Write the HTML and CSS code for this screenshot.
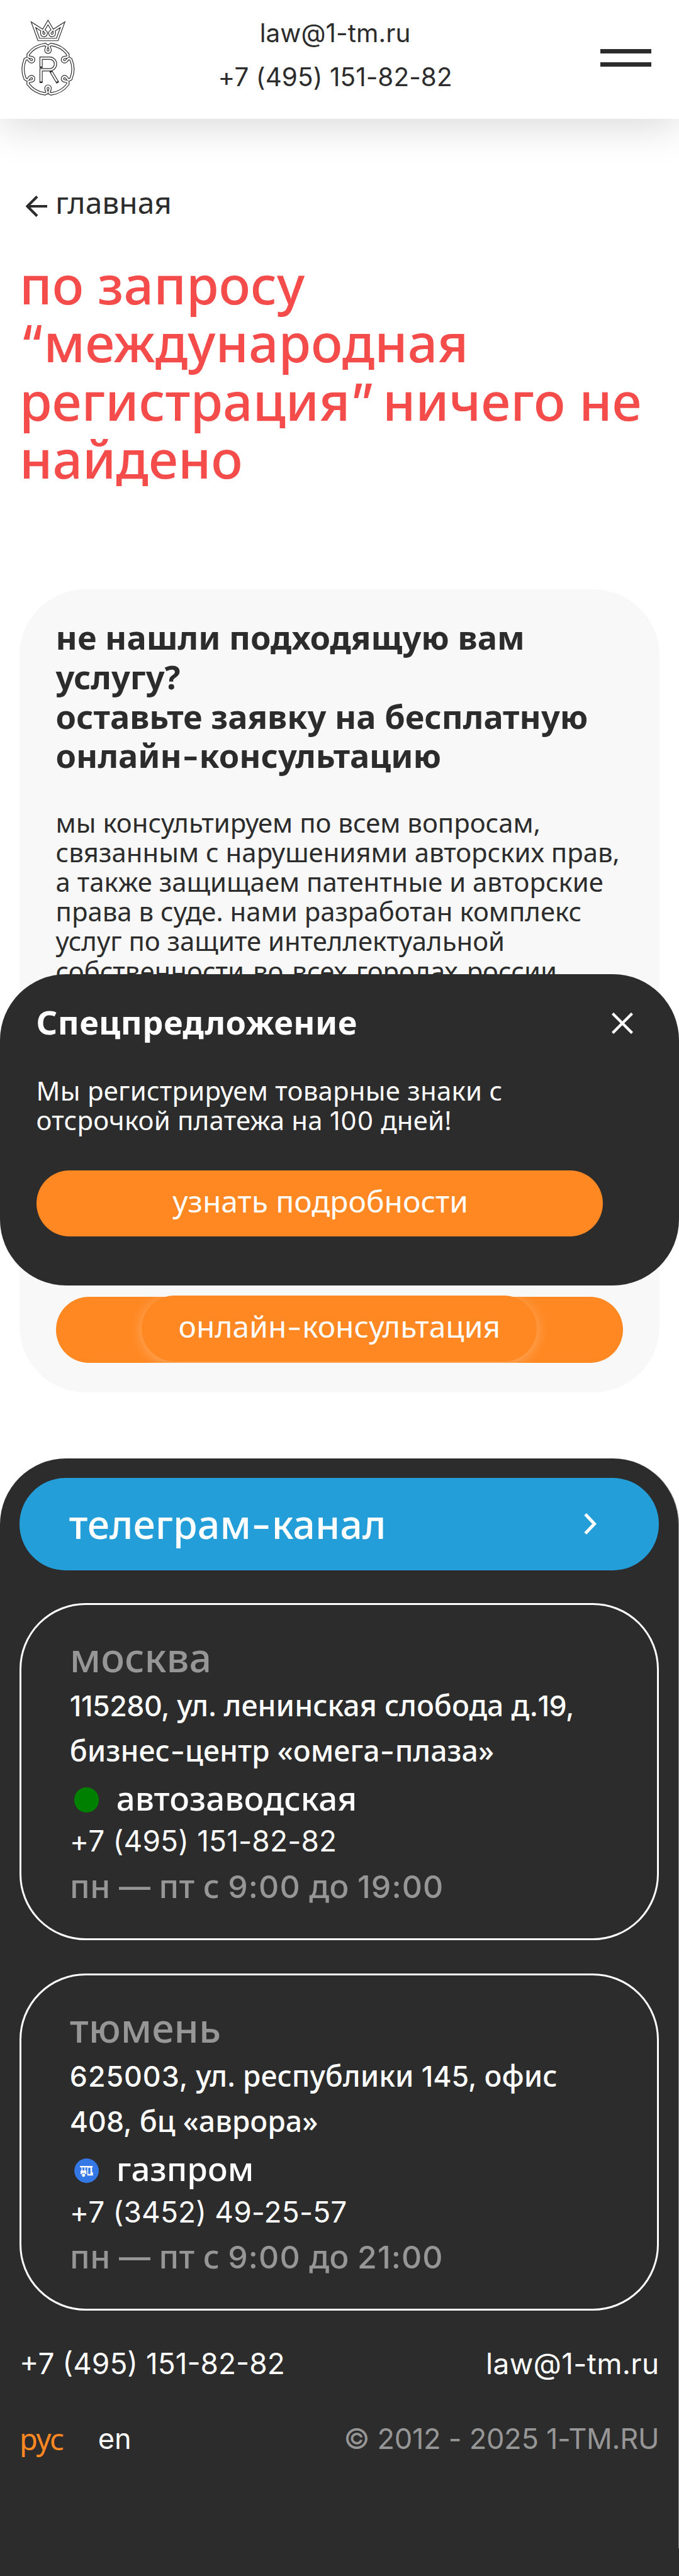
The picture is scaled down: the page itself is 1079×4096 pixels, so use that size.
FILE: index.html
```html
<!DOCTYPE html>
<html lang="ru">
<head>
<meta charset="utf-8">
<title>1-TM.RU</title>
<link rel="stylesheet" href="styles.css">
</head>
<body>
<div class="page">
  <header class="header">
    <svg class="logo" viewBox="12 8 89 126">
      <defs>
        <path id="link" d="M-5-40.2L-1.6-38.4C-1-36-3.5-34.5-3.5-31A3.5 3.5 0 0 0 3.5-31C3.5-34.5 1-36 1.6-38.4L5-40.2A40.5 40.5 0 0 1 32.3-24.4"/>
        <g id="mark" fill="none">
          <path d="M41.3 42.7L32.5 18.5L46.6 27.6C45.8 30 46.1 31 46.1 32.5A3.6 3.6 0 1 0 51.5 29.4C50 28.5 49 27.5 49.4 26.5L56.3 15L63.2 26.5C63.6 27.5 62.6 28.5 61.1 29.4A3.6 3.6 0 1 0 66.5 32.5C66.5 31 66.8 30 66 27.6L80.1 18.5L71.3 42.7Z"/>
          <g transform="translate(56.3 91)" stroke-linecap="round">
            <use href="#link"/><use href="#link" transform="rotate(60)"/><use href="#link" transform="rotate(120)"/>
            <use href="#link" transform="rotate(180)"/><use href="#link" transform="rotate(240)"/><use href="#link" transform="rotate(300)"/>
          </g>
          <path d="M45 86.5V73H59A9.5 9.5 0 0 1 59 92H45V111M62 96L71 111"/>
        </g>
      </defs>
      <use href="#mark" class="logo-line"/>
      <use href="#mark" class="logo-core"/>
    </svg>
    <div class="header-contacts">
      <a>law@1-tm.ru</a>
      <a>+7 (495) 151-82-82</a>
    </div>
    <div class="burger"><i></i><i></i></div>
  </header>

  <main class="main">
    <a class="back"><svg viewBox="0 0 34 34"><path d="M34 17H3M18 1.5L2.5 17L18 32.5"/></svg>главная</a>
    <h1 class="title">по запросу<br><span class="lat">“</span>международная<br>регистрация<span class="lat quote-end">”</span> ничего не<br>найдено</h1>

    <section class="card">
      <h2 class="card-title">не нашли подходящую вам<br>услугу?<br>оставьте заявку на бесплатную<br>онлайн<span class="dash">-</span>консультацию</h2>
      <p class="card-text">мы консультируем по всем вопросам,<br>связанным с нарушениями авторских прав,<br>а также защищаем патентные и авторские<br>права в суде. нами разработан комплекс<br>услуг по защите интеллектуальной<br><span class="loose">собственности во всех городах россии</span></p>
      <a class="button card-button"><span class="button-pulse">онлайн<span class="dash">-</span>консультация</span></a>
    </section>
  </main>

  <footer class="footer">
    <a class="telegram"><span>телеграм<span class="dash">-</span>канал</span><svg viewBox="0 0 20 34"><path d="M2.2 1.8L16.6 17L2.2 32.2"/></svg></a>

    <div class="office">
      <div class="city">москва</div>
      <div class="address"><span class="lat tight">115280,</span> ул. ленинская слобода д.<span class="lat tight">19,</span><br>бизнес<span class="dash">-</span>центр «омега<span class="dash">-</span>плаза»</div>
      <div class="metro"><i class="dot"></i>автозаводская</div>
      <div class="phone">+7 (495) 151-82-82</div>
      <div class="hours">пн <span class="lat">—</span> пт с <span class="lat wide">9:00</span> до <span class="lat wide">19:00</span></div>
    </div>

    <div class="office">
      <div class="city">тюмень</div>
      <div class="address"><span class="lat wide">625003,</span> ул. республики <span class="lat">145,</span> офис<br><span class="lat">408,</span> бц «аврора»</div>
      <div class="metro"><svg class="dot" viewBox="0 0 39 39"><circle cx="19.5" cy="19.5" r="19.5" fill="#3378e4"/><path d="M9 12H29V14H28V22H29.5V27H20.5V14H17.5V19H19V25H10V19H11.5V14H9ZM13 14V19H16V14ZM22 14.5V24.5H25.5V14.5Z" fill="#fff" fill-rule="evenodd"/><circle cx="14.6" cy="26.6" r="3" fill="#fff" stroke="#3378e4"/></svg>газпром</div>
      <div class="phone">+7 (3452) 49-25-57</div>
      <div class="hours">пн <span class="lat">—</span> пт с <span class="lat wide">9:00</span> до <span class="lat wide">21:00</span></div>
    </div>

    <div class="footer-row">
      <a>+7 (495) 151-82-82</a>
      <a class="mail">law@1-tm.ru</a>
    </div>
    <div class="footer-row footer-bottom">
      <div class="langs"><a class="lang-active">рус</a><a>en</a></div>
      <div class="copyright">© 2012 - 2025 1-TM.RU</div>
    </div>
  </footer>

  <aside class="offer">
    <div class="offer-head"><span class="offer-title">Спецпредложение</span><svg viewBox="0 0 34 34"><path d="M1.5 1.5L32.5 32.5M32.5 1.5L1.5 32.5"/></svg></div>
    <p class="offer-text">Мы регистрируем товарные знаки с<br>отсрочкой платежа на <span class="lat wide">100</span> дней!</p>
    <a class="button offer-button">узнать подробности</a>
  </aside>
</div>
</body>
</html>
```

FILE: styles.css
```css
* { box-sizing: border-box; }

body {
  margin: 0;
  background: #2c2c2c;
  color: #2c2c2c;
  font-family: "Noto Sans", sans-serif;
  white-space: nowrap;
}

h1, h2, p { margin: 0; }
svg { display: block; fill: none; flex: none; }

.page {
  position: relative;
  height: 4096px;
  background: linear-gradient(#fff 4000px, #2c2c2c 4000px);
}

/* Latin letters, digits and dashes */
.lat, .dash { font-family: Inter, sans-serif; font-size: 0.963em; line-height: 0; }
.dash { display: inline-block; margin: 0 0.04em; transform: scaleX(1.15); }
.wide { letter-spacing: 0.022em; }
.tight { letter-spacing: -0.01em; }
.quote-end { margin-right: -8px; }
.loose { word-spacing: 3px; }

/* Header */
.header {
  display: flex;
  justify-content: space-between;
  align-items: flex-start;
  height: 188.5px;
  padding: 0 44px 0 33px;
  background: #fff;
  box-shadow: 0 12px 60px rgba(0, 0, 0, 0.15);
}
.logo { width: 87px; height: 123px; margin-top: 29px; overflow: visible; }
.logo-line { stroke: #2c2c2c; stroke-width: 5; stroke-linecap: square; }
.logo-core { stroke: #fff; stroke-width: 2.6; }
.header-contacts {
  display: flex;
  flex-direction: column;
  align-items: center;
  padding: 17.7px 8.8px 0 0;
  font: 40.4px/70.8px Inter, sans-serif;
  letter-spacing: 0.1px;
}
.burger { display: flex; flex-direction: column; gap: 14px; width: 81px; margin-top: 78px; }
.burger i { height: 7px; background: #2c2c2c; }

/* Search result */
.main { padding: 0 31.4px 0 31px; }
.back {
  display: flex;
  align-items: center;
  gap: 13px;
  margin-top: 101px;
  padding-left: 10px;
  font-size: 47.9px;
  line-height: 64px;
}
.back svg { width: 34px; margin-top: 12px; stroke: #2c2c2c; stroke-width: 4.2; }
.title {
  margin-top: 52.5px;
  color: #f44b4b;
  font-size: 83.75px;
  font-weight: 500;
  line-height: 92.4px;
}

.card {
  display: flex;
  flex-direction: column;
  height: 1277.5px;
  margin-top: 161.3px;
  padding: 45.1px 57.6px 47.3px;
  border-radius: 105px;
  background: #f8f8f8;
}
.card-title { font-size: 52.35px; font-weight: 700; line-height: 62.8px; }
.card-text { margin-top: 50.9px; font-size: 41.9px; line-height: 47.1px; }

.button {
  display: flex;
  justify-content: center;
  height: 104.7px;
  border-radius: 52.4px;
  background: #ff8822;
  color: #fff;
  font-size: 47.9px;
  line-height: 98.4px;
}
.card-button { margin-top: auto; }
.button-pulse {
  width: 628px;
  height: 104.7px;
  margin-top: -2.6px;
  border-radius: 52.4px;
  background: #ff8822;
  box-shadow: 0 3px 20px rgba(255, 255, 255, 0.3);
  line-height: 97.6px;
  text-align: center;
}

/* Special offer popup */
.offer {
  position: absolute;
  top: 1549.2px;
  left: 0;
  right: 0;
  height: 494.6px;
  padding: 44.2px 0 0 57.6px;
  border-radius: 105px;
  background: #2c2c2c;
  color: #fff;
}
.offer-head {
  display: flex;
  justify-content: space-between;
  align-items: center;
  padding-right: 73px;
}
.offer-head svg { width: 34px; margin-top: 4px; stroke: #fff; stroke-width: 4.4; }
.offer-title { font-size: 52.35px; font-weight: 700; line-height: 64px; letter-spacing: 0.45px; }
.offer-text { margin-top: 53.6px; font-size: 41.9px; line-height: 46.9px; letter-spacing: 0.25px; }
.offer-button { width: 900px; margin-top: 56.3px; padding-left: 3px; }

/* Footer */
.footer {
  height: 1733.5px;
  margin-top: 104.2px;
  padding: 31.5px 30.6px 0 31px;
  border-right: 1px solid #8f8f8f;
  border-radius: 105px 105px 0 0;
  background: #2c2c2c;
  color: #fff;
}
.telegram {
  display: flex;
  justify-content: space-between;
  align-items: center;
  height: 146.5px;
  padding: 0 99px 0 78.5px;
  border-radius: 73.3px;
  background: #239ed9;
  font-size: 62.8px;
  font-weight: 500;
  line-height: 140px;
}
.telegram svg { width: 20px; stroke: #fff; stroke-width: 5; }

.office {
  height: 536px;
  margin-top: 52.2px;
  padding: 45.1px 0 0 76.8px;
  border: 3px solid #fff;
  border-radius: 105px;
}
.office + .office { margin-top: 53.4px; }
.city { color: #969696; font-size: 62.8px; font-weight: 500; line-height: 75px; }
.address { margin-top: 4px; font-size: 46.4px; font-weight: 500; line-height: 71.9px; }
.metro {
  display: flex;
  align-items: center;
  gap: 27.5px;
  margin-top: 4.2px;
  padding-left: 7px;
  font-size: 52.85px;
  font-weight: 500;
  line-height: 70px;
}
.dot { width: 39.4px; height: 39.4px; margin-top: 6px; border-radius: 50%; }
i.dot { background: #008000; }
.phone { margin-top: 3.5px; font: 46px/60px Inter, sans-serif; letter-spacing: 0.15px; }
.hours { margin-top: 4.2px; color: #969696; font-size: 51.9px; font-weight: 500; line-height: 72px; }

.footer-row {
  display: flex;
  justify-content: space-between;
  margin-top: 54.2px;
  font: 46px/60px Inter, sans-serif;
}
.mail { letter-spacing: 0.3px; }
.footer-bottom { margin-top: 59.2px; font-size: 45.2px; }
.langs { display: flex; gap: 54px; }
.lang-active { color: #ff8822; font-family: "Noto Sans", sans-serif; font-size: 47px; letter-spacing: -0.7px; }
.copyright { color: #969696; letter-spacing: -0.3px; }
```
